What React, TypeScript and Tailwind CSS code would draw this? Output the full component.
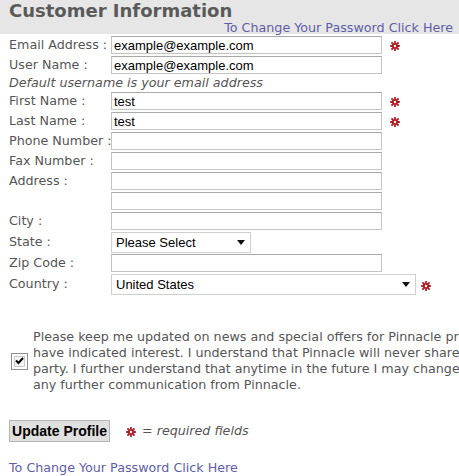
import type { ReactNode } from 'react';

const labelFont = "font-['DejaVu_Sans',Verdana,sans-serif]";
const fieldFont = "font-['Liberation_Sans',Arial,sans-serif]";

function Required() {
  return (
    <svg width="10" height="10" viewBox="0 0 10 10" className="shrink-0">
      <g stroke="#ad1a24" strokeWidth="1.8" strokeLinecap="round">
        <line x1="5" y1="0.8" x2="5" y2="9.2" />
        <line x1="0.8" y1="5" x2="9.2" y2="5" />
        <line x1="2" y1="2" x2="8" y2="8" />
        <line x1="8" y1="2" x2="2" y2="8" />
      </g>
      <circle cx="5" cy="5" r="1.2" fill="#fff" />
    </svg>
  );
}

function TextField({ value = '' }: { value?: string }) {
  return (
    <input
      type="text"
      defaultValue={value}
      className={`${fieldFont} block h-[18px] w-[271px] border border-[#c4c4c4] border-t-[#a9a9a9] bg-white px-[2px] text-[13px] leading-none text-black outline-none`}
    />
  );
}

function Dropdown({ value, width }: { value: string; width: string }) {
  return (
    <div className={`relative h-[21px] ${width}`}>
      <select
        defaultValue={value}
        className={`${fieldFont} block h-full w-full appearance-none border border-[#cfcfcf] bg-white pl-[4px] text-[13px] text-black outline-none`}
      >
        <option>{value}</option>
      </select>
      <svg width="8" height="5" viewBox="0 0 8 5" className="pointer-events-none absolute right-[6px] top-[8px]">
        <path d="M0 0 H8 L4 5 Z" fill="#111" />
      </svg>
    </div>
  );
}

function Row({ label, children, required }: { label: string; children?: ReactNode; required?: boolean }) {
  return (
    <div className="flex h-5 items-center">
      <span className="w-[102px] shrink-0 whitespace-nowrap text-[12.7px] text-[#555]">{label}</span>
      {children}
      {required && <span className="ml-[8px] mt-[2px] flex"><Required /></span>}
    </div>
  );
}

export default function App() {
  return (
    <div className={`${labelFont} h-[476px] w-[459px] overflow-hidden bg-white`}>
      <div className="h-[34px] bg-[#e6e6e6]">
        <h1 className="pl-[9px] pt-[1px] text-[18px] font-bold leading-[20px] text-[#5a5a5a]">Customer Information</h1>
        <div className="flex justify-end pr-[6px]">
          <a href="#" className="text-[12.7px] leading-[13px] text-[#5e5ea6]">To Change Your Password Click Here</a>
        </div>
      </div>

      <div className="pl-[9px] pt-[1px]">
        <Row label="Email Address :" required><TextField value="example@example.com" /></Row>
        <Row label="User Name :"><TextField value="example@example.com" /></Row>
        <div className="flex h-4 items-center text-[12.7px] italic text-[#555]">Default username is your email address</div>
        <Row label="First Name :" required><TextField value="test" /></Row>
        <Row label="Last Name :" required><TextField value="test" /></Row>
        <Row label="Phone Number :"><TextField /></Row>
        <Row label="Fax Number :"><TextField /></Row>
        <Row label="Address :"><TextField /></Row>
        <Row label=""><TextField /></Row>
        <Row label="City :"><TextField /></Row>
        <div className="flex h-[22px] items-center">
          <span className="w-[102px] shrink-0 text-[12.7px] text-[#555]">State :</span>
          <Dropdown value="Please Select" width="w-[140px]" />
        </div>
        <Row label="Zip Code :"><TextField /></Row>
        <div className="flex h-[22px] items-center">
          <span className="w-[102px] shrink-0 text-[12.7px] text-[#555]">Country :</span>
          <Dropdown value="United States" width="w-[305px]" />
          <span className="ml-[5px] mt-[4px] flex"><Required /></span>
        </div>
      </div>

      <div className="mt-[34px] flex items-center pl-[11px]">
        <div className="flex h-[17px] w-[17px] shrink-0 items-center justify-center border border-[#8f8f8f] bg-white">
          <div className="flex h-[11px] w-[11px] items-center justify-center border border-[#c9c9c9] bg-[#f4f4f4]">
            <svg width="9" height="8" viewBox="0 0 9 8">
              <path d="M1 3.5 L3.5 6 L8 1" stroke="#000" strokeWidth="2" fill="none" />
            </svg>
          </div>
        </div>
        <p className="ml-[5px] whitespace-nowrap text-[12.7px] leading-[16px] text-[#555]">
          Please keep me updated on news and special offers for Pinnacle products in which I<br />
          have indicated interest. I understand that Pinnacle will never share my information with a third<br />
          party. I further understand that anytime in the future I may change my mind and opt out of receiving<br />
          any further communication from Pinnacle.
        </p>
      </div>

      <div className="mt-[27px] flex items-center pl-[9px]">
        <button
          type="button"
          className={`${fieldFont} h-[22px] w-[101px] border border-[#b5b5b5] bg-[#e0e0e0] text-[14px] font-bold text-black`}
        >
          Update Profile
        </button>
        <span className="ml-[16px] mt-[2px] flex"><Required /></span>
        <span className="ml-[6px] text-[12.7px] italic text-[#555]">= required fields</span>
      </div>

      <div className="mt-[13px] pl-[9px]">
        <a href="#" className="text-[12.7px] text-[#5e5ea6]">To Change Your Password Click Here</a>
      </div>
    </div>
  );
}
